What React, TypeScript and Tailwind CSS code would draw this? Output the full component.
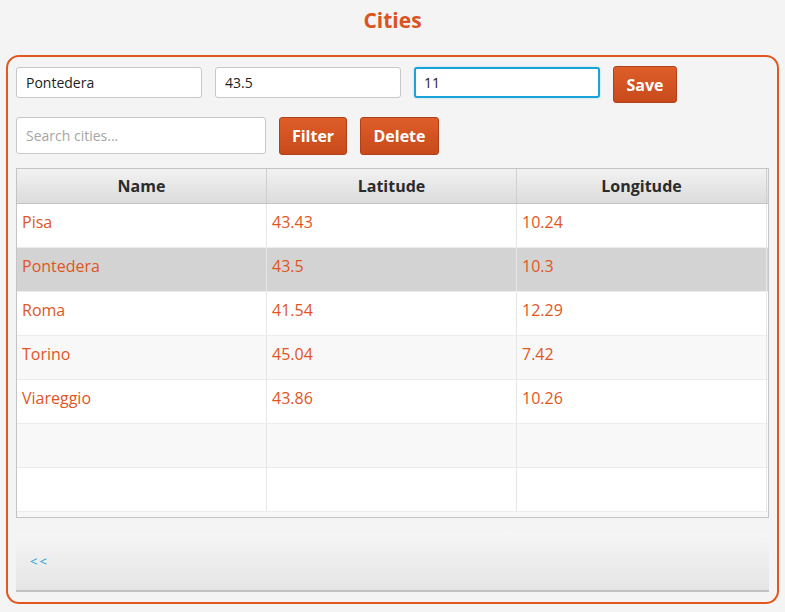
import React from 'react';

const rows = [
  { name: 'Pisa', lat: '43.43', lng: '10.24' },
  { name: 'Pontedera', lat: '43.5', lng: '10.3', selected: true },
  { name: 'Roma', lat: '41.54', lng: '12.29' },
  { name: 'Torino', lat: '45.04', lng: '7.42' },
  { name: 'Viareggio', lat: '43.86', lng: '10.26' },
  { name: '', lat: '', lng: '' },
  { name: '', lat: '', lng: '' },
];

const font = { fontFamily: '"Open Sans", "Noto Sans", sans-serif' };

function OrangeButton({ label, className }: { label: string; className: string }) {
  return (
    <button
      className={`flex items-center justify-center rounded-[3px] border border-[#b0401a] bg-gradient-to-b from-[#de5e29] to-[#c84a1b] text-[16px] font-bold text-white ${className}`}
    >
      {label}
    </button>
  );
}

export default function App() {
  return (
    <div className="h-[612px] w-[785px] overflow-hidden bg-[#f4f4f4] text-[#333]" style={font}>
      <h1 className="pt-[6px] text-center text-[21px] font-bold leading-[29px] text-[#d9541e]">Cities</h1>

      <div className="mx-[6px] mt-[20px] h-[549px] rounded-[13px] border-2 border-[#e0581f] px-[8px] pt-[9px]">
        {/* form row */}
        <div className="flex items-start gap-[13px]">
          <div className="mt-[1px] flex h-[31px] w-[186px] items-center rounded-[3px] border border-[#c8c8c8] bg-white px-[9px] text-[14px] text-[#222]">
            Pontedera
          </div>
          <div className="mt-[1px] flex h-[31px] w-[186px] items-center rounded-[3px] border border-[#c8c8c8] bg-white px-[9px] text-[14px] text-[#222]">
            43.5
          </div>
          <div className="mt-[1px] flex h-[31px] w-[186px] items-center rounded-[3px] border-2 border-[#1aa3d9] bg-white px-[8px] text-[14px] text-[#222] shadow-[0_0_2px_#9fd8ee]">
            11
          </div>
          <OrangeButton label="Save" className="h-[37px] w-[64px]" />
        </div>

        {/* search row */}
        <div className="mt-[14px] flex items-start gap-[13px]">
          <div className="flex h-[37px] w-[250px] items-center rounded-[3px] border border-[#c8c8c8] bg-white px-[9px] text-[14px] text-[#a5a5a5]">
            Search cities...
          </div>
          <OrangeButton label="Filter" className="h-[38px] w-[68px]" />
          <OrangeButton label="Delete" className="h-[38px] w-[79px]" />
        </div>

        {/* table */}
        <div className="mt-[13px] h-[350px] w-[753px] overflow-hidden border border-[#c4c4c4] bg-[#f7f7f7]">
          <div className="flex h-[35px] border-b border-[#c4c4c4] bg-gradient-to-b from-[#f2f2f2] to-[#dcdcdc]">
            {['Name', 'Latitude', 'Longitude'].map((h) => (
              <div
                key={h}
                className="flex w-[250px] items-center justify-center border-r border-[#cfcfcf] text-[16px] font-bold text-[#2b2b2b]"
              >
                {h}
              </div>
            ))}
          </div>
          {rows.map((r, i) => (
            <div
              key={i}
              className={`flex h-[44px] border-b border-[#ececec] text-[16px] text-[#e0561e] ${
                r.selected ? 'bg-[#d3d3d3]' : i % 2 === 0 ? 'bg-white' : 'bg-[#f8f8f8]'
              }`}
            >
              {[r.name, r.lat, r.lng].map((c, j) => (
                <div key={j} className="flex w-[250px] items-start border-r border-[#e6e6e6] pl-[5px] pt-[6px]">
                  {c}
                </div>
              ))}
            </div>
          ))}
        </div>

        {/* pagination bar */}
        <div className="mt-[13px] flex h-[61px] w-[753px] items-center border-b-2 border-[#c2c2c2] bg-gradient-to-b from-[#f6f6f6] to-[#e5e5e5] pl-[14px]">
          <span className="pt-[2px] text-[13px] tracking-[2px] text-[#1b9ad6]">&lt;&lt;</span>
        </div>
      </div>
    </div>
  );
}
